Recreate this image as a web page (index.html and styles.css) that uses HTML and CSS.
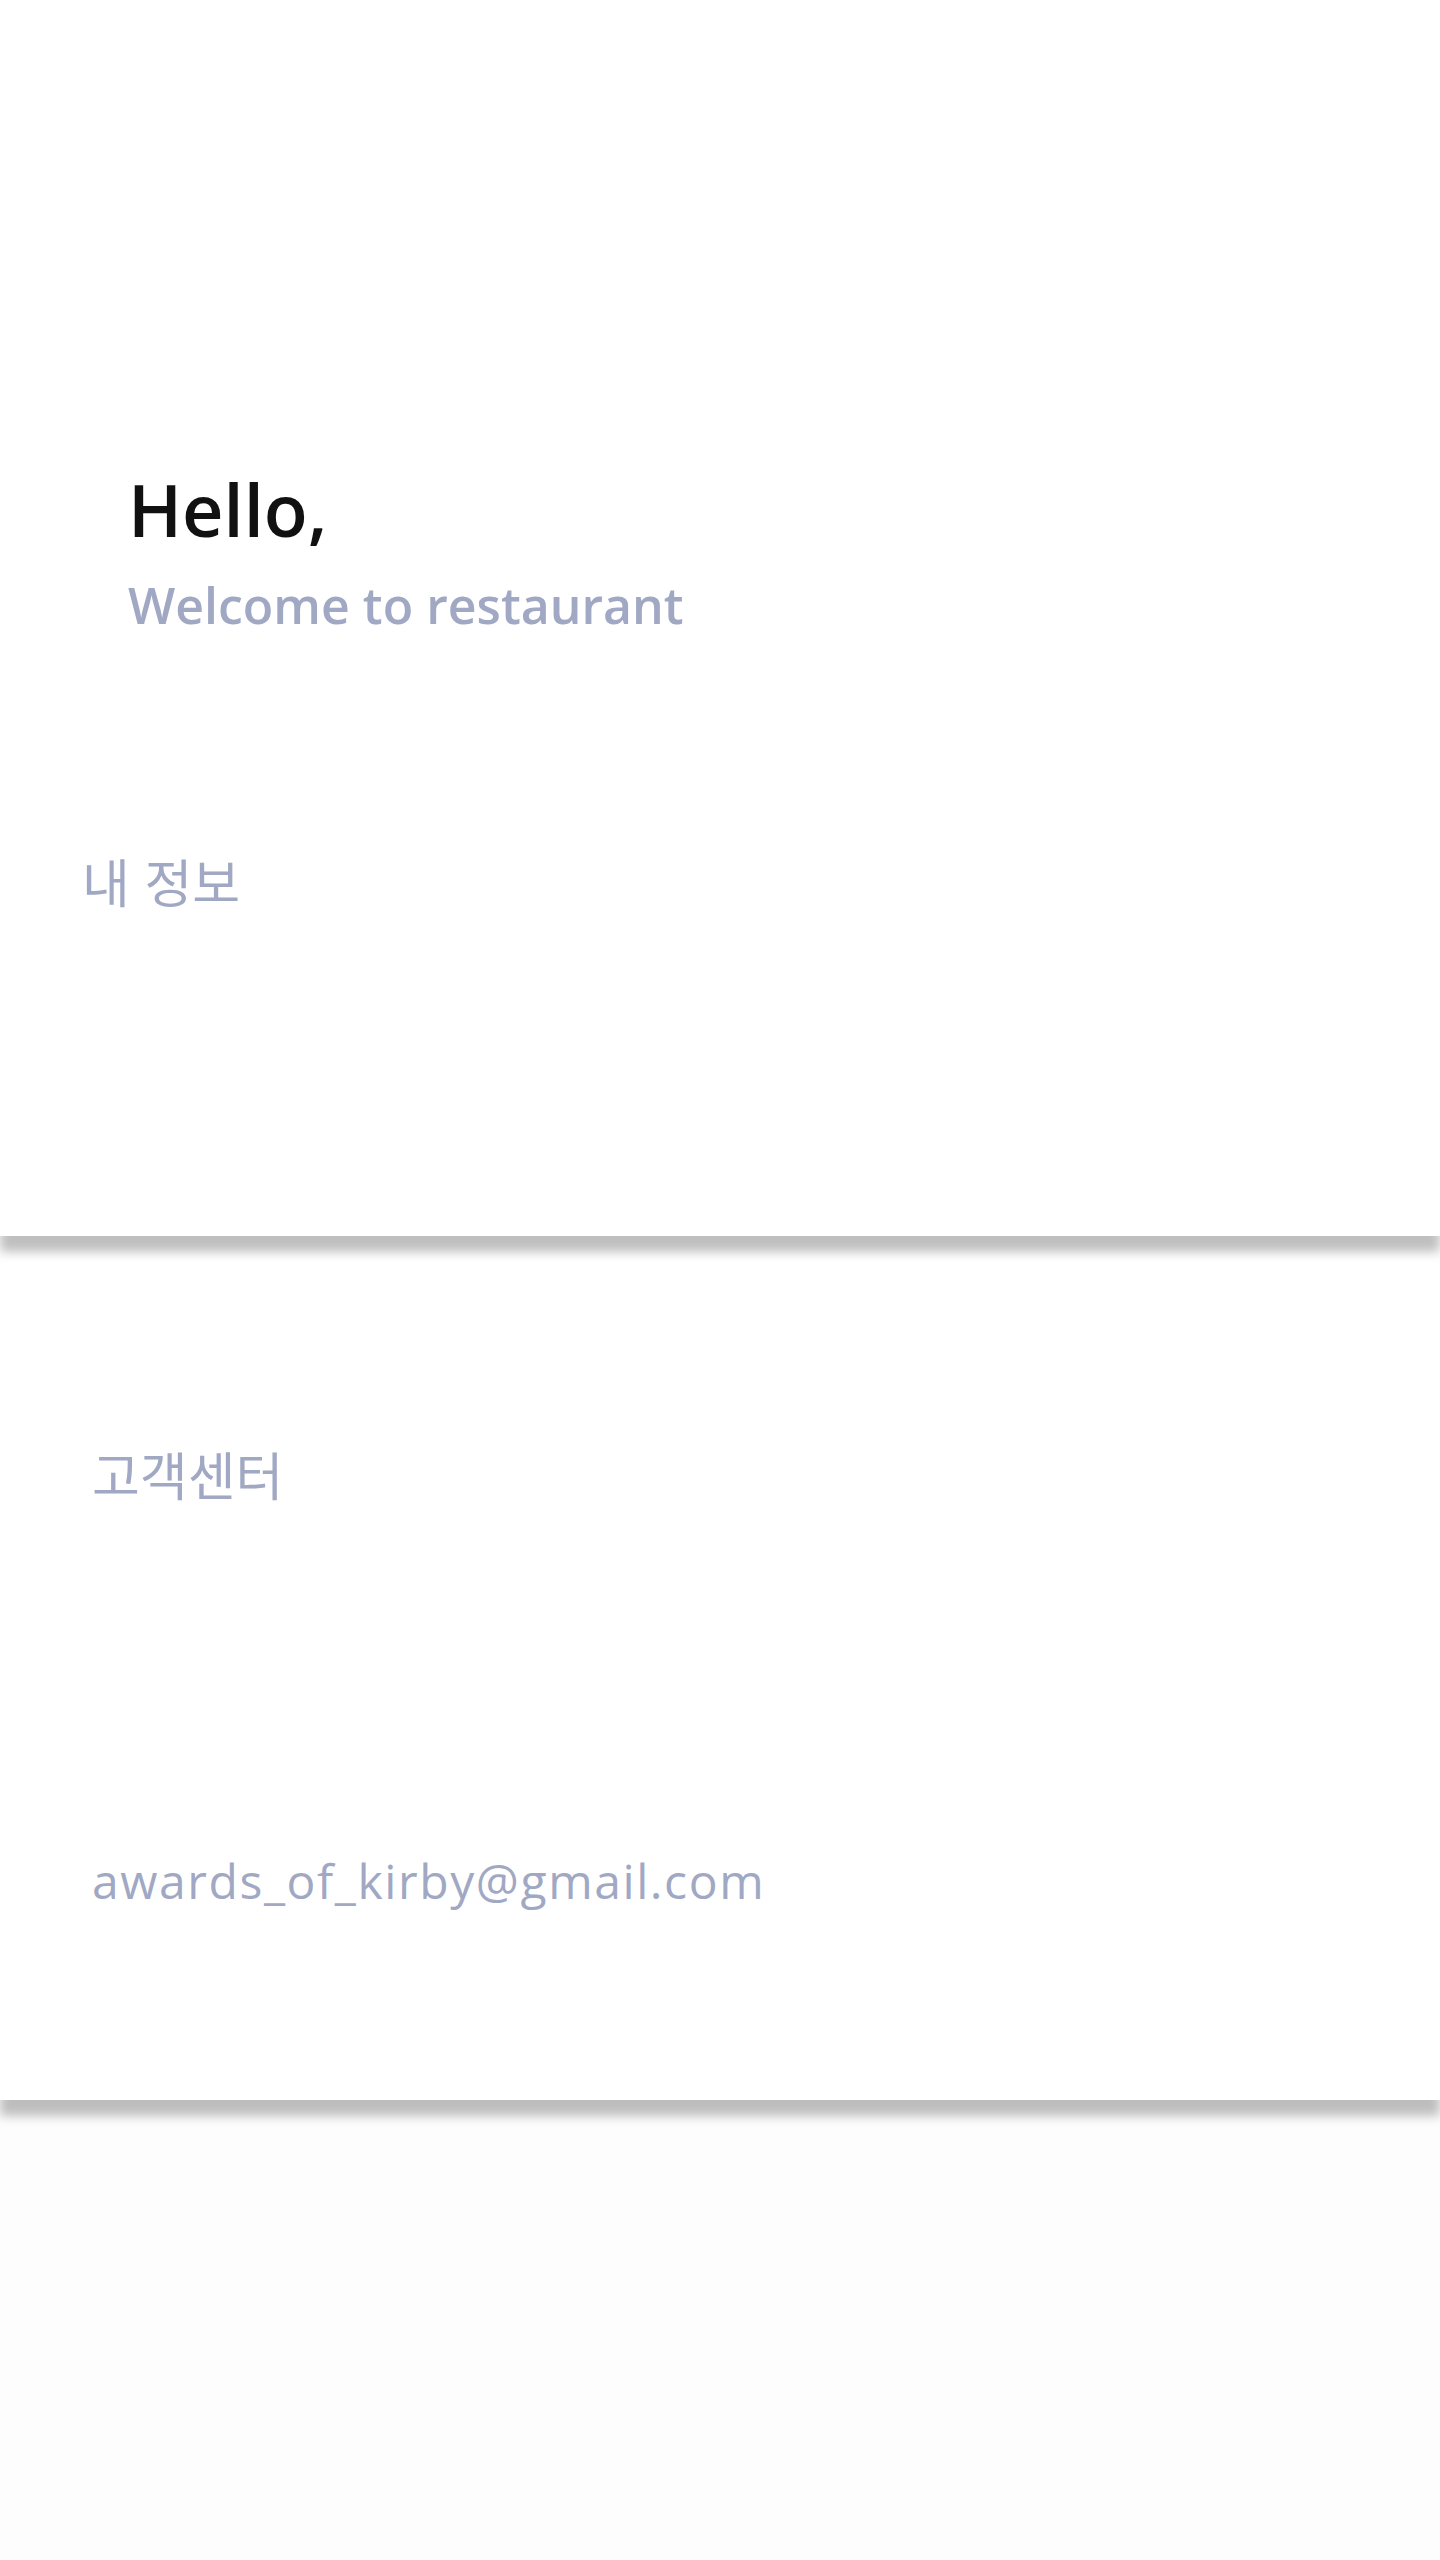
FILE: index.html
```html
<!DOCTYPE html>
<html lang="ko">
<head>
<meta charset="utf-8">
<title>My Page</title>
<link rel="stylesheet" href="styles.css">
</head>
<body>
  <main class="page">
    <section class="card card-top">
      <div class="greeting">
        <h1 class="hello">Hello,</h1>
        <p class="welcome">Welcome to restaurant</p>
      </div>
      <p class="menu-label menu-label-info">내 정보</p>
    </section>
    <section class="card card-support">
      <p class="menu-label">고객센터</p>
      <p class="email">awards_of_kirby@gmail.com</p>
    </section>
    <footer class="rest"></footer>
  </main>
</body>
</html>
```

FILE: styles.css
```css
html, body {
  margin: 0;
  padding: 0;
}

body {
  background: #fdfdfd;
  font-family: "Open Sans", "Noto Sans CJK KR", sans-serif;
  width: 1440px;
  min-height: 2560px;
}

.page {
  display: flex;
  flex-direction: column;
}

.card {
  background: #ffffff;
  box-shadow: 0 16px 10px rgba(0, 0, 0, 0.25);
  position: relative;
  display: flex;
  flex-direction: column;
  box-sizing: border-box;
}

.card-top {
  height: 1236px;
  padding-top: 473px;
  z-index: 3;
}

.card-support {
  height: 864px;
  padding-top: 212px;
  padding-left: 92px;
  z-index: 2;
}

.greeting {
  display: flex;
  flex-direction: column;
  gap: 35px;
  padding-left: 128px;
}

.hello {
  margin: 0;
  font-size: 72px;
  line-height: 1;
  font-weight: 600;
  color: #111111;
}

.welcome {
  margin: 0;
  font-size: 50px;
  line-height: 1;
  font-weight: 600;
  color: #a0a8c3;
}

.menu-label {
  margin: 0;
  font-family: "Noto Sans CJK KR", sans-serif;
  font-size: 52px;
  line-height: 1;
  font-weight: 400;
  color: #a0a8c3;
}

.menu-label-info {
  margin-top: 225px;
  padding-left: 82px;
}

.email {
  margin: 357px 0 0;
  font-size: 48px;
  line-height: 1;
  font-weight: 400;
  letter-spacing: 1.6px;
  color: #a0a8c3;
}

.rest {
  flex: 1;
  min-height: 460px;
  background: #fdfdfd;
}
```
